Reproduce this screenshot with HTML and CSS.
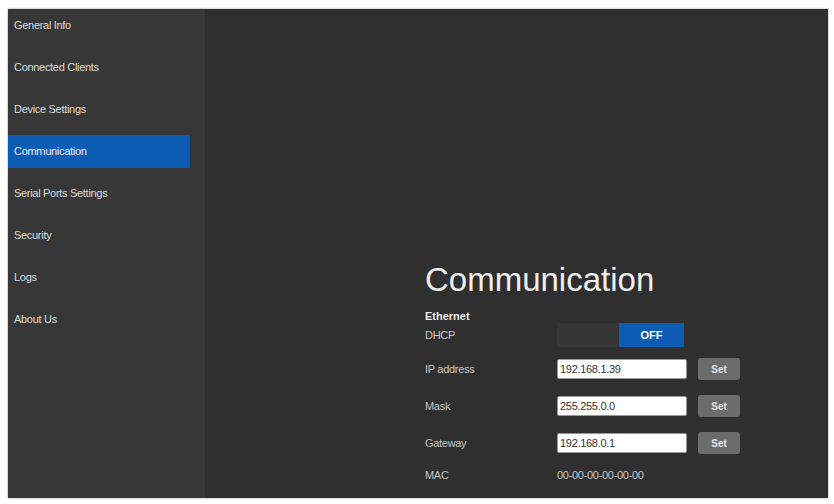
FILE: index.html
```html
<!DOCTYPE html>
<html lang="en">
<head>
  <meta charset="UTF-8">
  <title>Communication</title>
  <link rel="stylesheet" href="styles.css">
</head>
<body>

<div class="frame">
  <!-- Side Menu -->
  <ul class="side-menu">
    <li>General Info</li>
    <li>Connected Clients</li>
    <li>Device Settings</li>
    <li class="active">Communication</li>
    <li>Serial Ports Settings</li>
    <li>Security</li>
    <li>Logs</li>
    <li>About Us</li>
  </ul>

  <!-- Communication Page -->
  <div class="main">
    <h1>Communication</h1>
    <div class="section-title">Ethernet</div>

    <div class="row row-dhcp">
      <span class="label">DHCP</span>
      <div class="toggle">
        <span class="toggle-off"></span>
        <span class="toggle-on">OFF</span>
      </div>
    </div>

    <div class="row">
      <span class="label">IP address</span>
      <input type="text" value="192.168.1.39">
      <button>Set</button>
    </div>

    <div class="row">
      <span class="label">Mask</span>
      <input type="text" value="255.255.0.0">
      <button>Set</button>
    </div>

    <div class="row">
      <span class="label">Gateway</span>
      <input type="text" value="192.168.0.1">
      <button>Set</button>
    </div>

    <div class="row row-mac">
      <span class="label">MAC</span>
      <span class="value">00-00-00-00-00-00</span>
    </div>
  </div>
</div>

</body>
</html>
```

FILE: styles.css
```css
body { margin: 0; padding: 9px 6px 6px 8px; background: #fff; font-family: "Liberation Sans", Arial, sans-serif; }

.frame {
  display: flex;
  height: 489px;
  background: #2f2f2f;
  box-shadow: 0 0 2px rgba(0,0,0,0.4);
}

/* Side Menu */
.side-menu {
  list-style: none;
  margin: 0;
  padding: 0 15px 0 0;
  width: 182px;
  background: #373737;
  display: flex;
  flex-direction: column;
  gap: 9px;
}
.side-menu li {
  height: 33px;
  line-height: 33px;
  padding-left: 6px;
  font-size: 11px;
  letter-spacing: -0.3px;
  color: #dcdcdc;
}
.side-menu li.active { background: #0c5cb5; color: #e8eef8; }

/* Main area */
.main {
  flex: 1;
  padding: 252px 0 0 220px;
  color: #d0d0d0;
}
h1 {
  margin: 0;
  font-size: 33px;
  line-height: 38px;
  font-weight: normal;
  color: #f0f0f0;
}
.section-title {
  margin-top: 10px;
  font-size: 11px;
  line-height: 14px;
  font-weight: bold;
  color: #ececec;
}

.row {
  display: grid;
  grid-template-columns: 121px 130px 42px;
  column-gap: 11px;
  align-items: center;
  height: 22px;
  margin-top: 15px;
  font-size: 11px;
}
.row-dhcp { height: 24px; margin-top: 0; }
.row-dhcp + .row { margin-top: 11px; }
.row-mac { margin-top: 10px; }
.label { color: #c8c8c8; letter-spacing: -0.3px; }
.value { color: #c8c8c8; letter-spacing: -0.3px; }

.toggle { display: flex; width: 127px; height: 24px; }
.toggle-off { flex: 1; background: #363636; }
.toggle-on {
  width: 65px;
  background: #0c5cb5;
  color: #fff;
  font-weight: bold;
  font-size: 11px;
  text-align: center;
  line-height: 24px;
}

input {
  box-sizing: border-box;
  width: 130px;
  height: 20px;
  padding: 0 2px;
  border: 1px solid #999;
  border-radius: 2px;
  font-family: "Liberation Sans", Arial, sans-serif;
  font-size: 11px;
  letter-spacing: -0.3px;
  color: #333;
  background: #fff;
}
button {
  width: 42px;
  height: 22px;
  padding: 0;
  border: none;
  border-radius: 3px;
  background: #6c6c6c;
  color: #e6e6e6;
  font-family: "Liberation Sans", Arial, sans-serif;
  font-weight: bold;
  font-size: 10px;
}
```
